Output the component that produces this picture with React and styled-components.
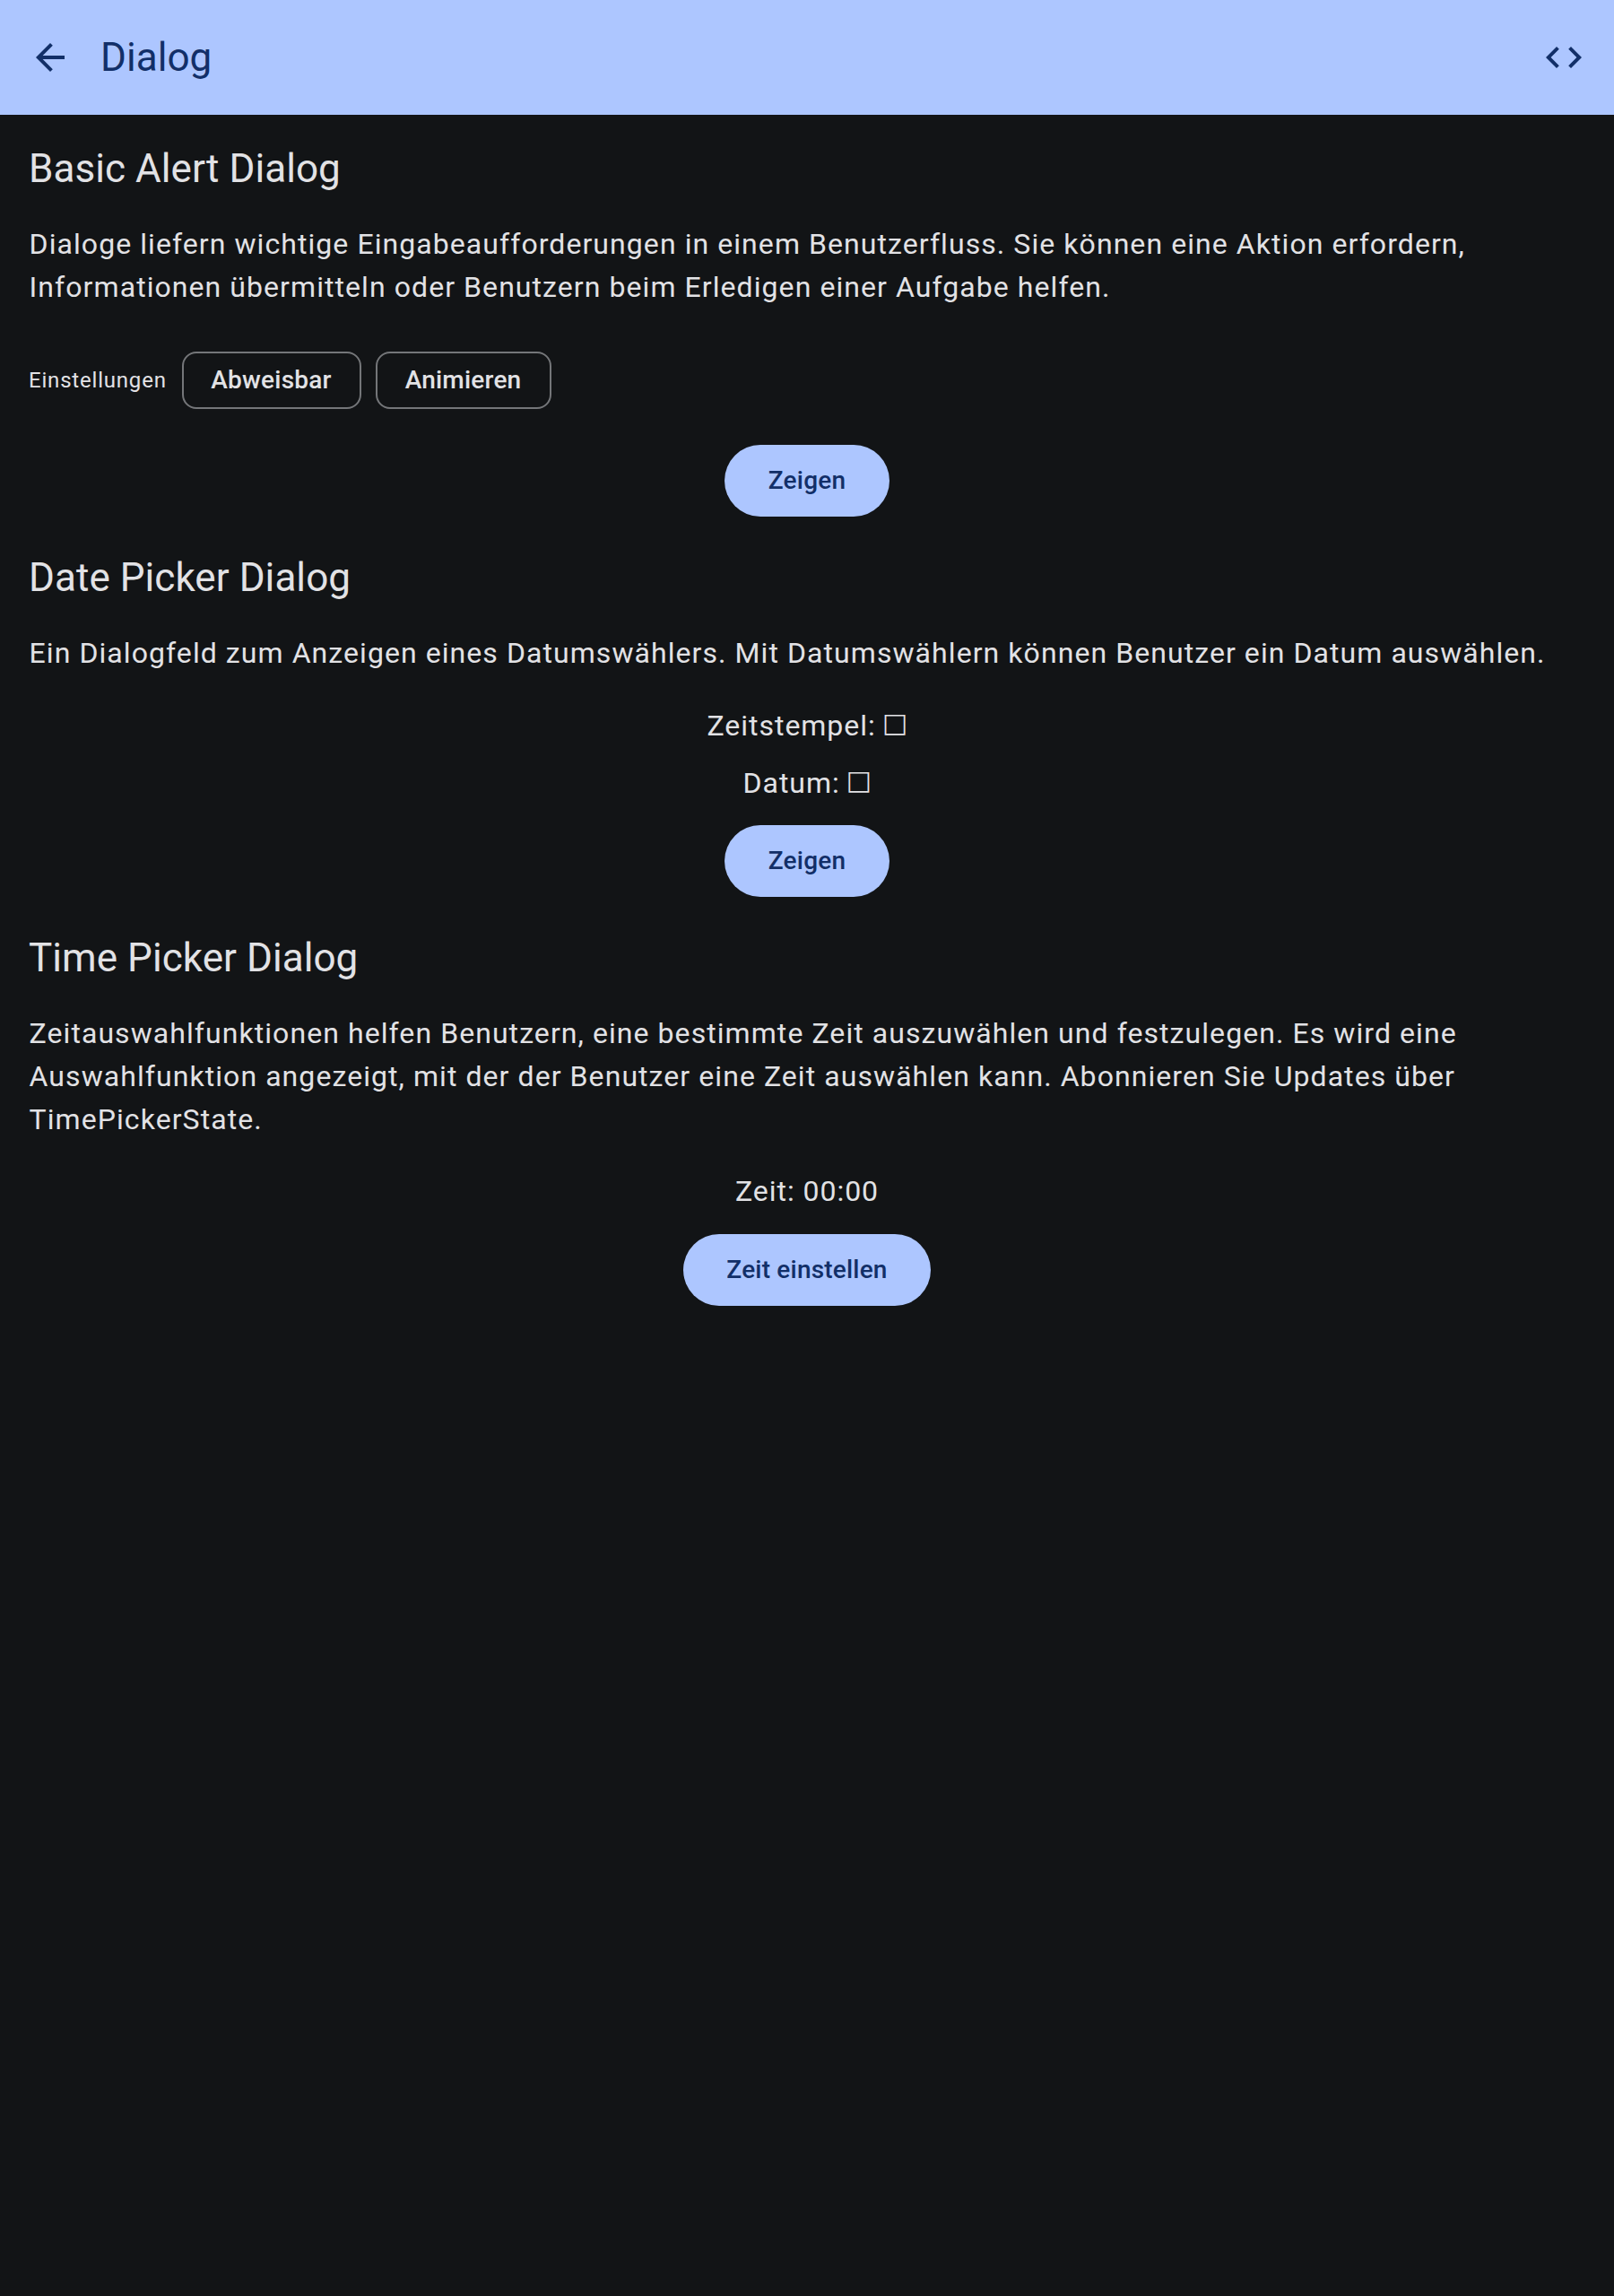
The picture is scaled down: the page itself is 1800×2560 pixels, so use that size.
import React from "react";
import styled, { createGlobalStyle } from "styled-components";

const GlobalStyle = createGlobalStyle`
  *, *::before, *::after { box-sizing: border-box; }
  body {
    margin: 0;
    background: #121416;
    color: #e2e2e5;
    font-family: Roboto, "Noto Sans", sans-serif;
  }
`;

const Screen = styled.div`
  min-height: 2560px;
  background: #121416;
`;

const TopBar = styled.header`
  display: flex;
  align-items: center;
  height: 128px;
  padding: 0 32px;
  background: #adc6ff;
  color: #122f68;
`;

const Title = styled.h1`
  flex: 1;
  margin: 0 0 0 32px;
  font-size: 44px;
  font-weight: 400;
  letter-spacing: 0.06px;
  line-height: 56px;
`;

const IconButton = styled.button`
  display: flex;
  padding: 0;
  border: 0;
  background: none;
  color: inherit;

  svg {
    width: 48px;
    height: 48px;
    fill: currentColor;
  }
`;

const Content = styled.main`
  display: flex;
  flex-direction: column;
  gap: 40px;
  padding: 32px;
`;

const Section = styled.section`
  display: flex;
  flex-direction: column;
`;

const Heading = styled.h2`
  margin: 0 0 32px;
  font-size: 44px;
  font-weight: 400;
  letter-spacing: 0.06px;
  line-height: 56px;
`;

const Body = styled.p`
  margin: 0;
  padding-left: 0.6px;
  font-size: 32px;
  letter-spacing: 1.067px;
  line-height: 48px;
`;

const Settings = styled.div`
  display: flex;
  align-items: center;
  gap: 16px;
  margin: 48px 0 40px;
`;

const SettingsLabel = styled.span`
  margin-right: 1px;
  font-size: 24px;
  letter-spacing: 0.8px;
  line-height: 32px;
`;

const Chip = styled.button`
  height: 64px;
  padding: 0 31.4px 0 30.6px;
  border: 2px solid #747679;
  border-radius: 16px;
  background: none;
  color: inherit;
  font: 500 28px/40px Roboto, sans-serif;
  letter-spacing: 0.22px;
`;

const Values = styled.div`
  display: flex;
  flex-direction: column;
  align-items: center;
  gap: 16px;
  margin: ${({ $drop = 0 }) => `${32 + $drop}px 0 ${24 - $drop}px`};
`;

const Value = styled(Body)`
  height: 48px;
  padding: 0;
  letter-spacing: 0.97px;
  white-space: nowrap;
`;

const Glyph = styled.span`
  margin: 0 -1.5px 0 -2px;
  font-family: "DejaVu Sans", sans-serif;
  font-size: 30px;
  line-height: 1;
  vertical-align: 4px;
`;

const FilledButton = styled.button`
  align-self: center;
  height: 80px;
  min-width: 184px;
  padding: 0 48px;
  border: 0;
  border-radius: 40px;
  background: #adc6ff;
  color: #122f68;
  font: 500 28px/40px Roboto, sans-serif;
  letter-spacing: 0.2px;
`;

const BackIcon = () => (
  <svg viewBox="0 0 24 24">
    <path d="M20 11H7.83l5.59-5.59L12 4l-8 8 8 8 1.41-1.41L7.83 13H20v-2z" />
  </svg>
);

const CodeIcon = () => (
  <svg viewBox="0 0 24 24">
    <path d="M9.4 16.6L4.8 12l4.6-4.6L8 6l-6 6 6 6 1.4-1.4zm5.2 0l4.6-4.6-4.6-4.6L16 6l6 6-6 6-1.4-1.4z" />
  </svg>
);

export default function App() {
  return (
    <Screen lang="de">
      <GlobalStyle />
      <TopBar>
        <IconButton><BackIcon /></IconButton>
        <Title>Dialog</Title>
        <IconButton><CodeIcon /></IconButton>
      </TopBar>
      <Content>
        <Section>
          <Heading>Basic Alert Dialog</Heading>
          <Body>
            Dialoge liefern wichtige Eingabeaufforderungen in einem Benutzerfluss. Sie können eine
            Aktion erfordern, Informationen übermitteln oder Benutzern beim Erledigen einer Aufgabe
            helfen.
          </Body>
          <Settings>
            <SettingsLabel>Einstellungen</SettingsLabel>
            <Chip>Abweisbar</Chip>
            <Chip>Animieren</Chip>
          </Settings>
          <FilledButton>Zeigen</FilledButton>
        </Section>
        <Section>
          <Heading>Date Picker Dialog</Heading>
          <Body>
            Ein Dialogfeld zum Anzeigen eines Datumswählers. Mit Datumswählern können Benutzer ein
            Datum auswählen.
          </Body>
          <Values $drop={1}>
            <Value>Zeitstempel: <Glyph>□</Glyph></Value>
            <Value>Datum: <Glyph>□</Glyph></Value>
          </Values>
          <FilledButton>Zeigen</FilledButton>
        </Section>
        <Section>
          <Heading>Time Picker Dialog</Heading>
          <Body>
            Zeitauswahlfunktionen helfen Benutzern, eine bestimmte Zeit auszuwählen und festzulegen.
            Es wird eine Auswahlfunktion angezeigt, mit der der Benutzer eine Zeit auswählen kann.
            Abonnieren Sie Updates über TimePickerState.
          </Body>
          <Values>
            <Value>Zeit: 00:00</Value>
          </Values>
          <FilledButton>Zeit einstellen</FilledButton>
        </Section>
      </Content>
    </Screen>
  );
}
